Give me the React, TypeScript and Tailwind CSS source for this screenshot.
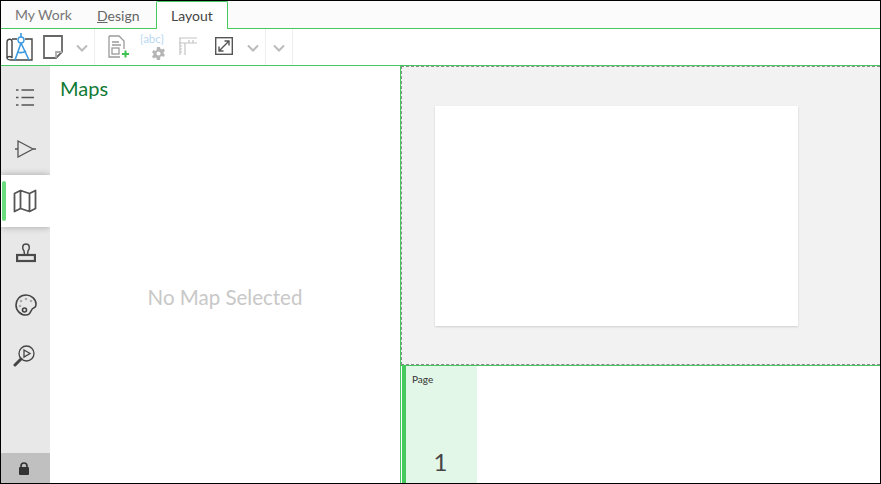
import React from "react";

const Chevron = () => (
  <svg width="12" height="8" viewBox="0 0 12 8" fill="none" stroke="#bbb" strokeWidth="2"><path d="M1 1.500l5 5 5-5" /></svg>
);

const SideIcon = ({ children, active }: { children: React.ReactNode; active?: boolean }) => (
  <div className={active ? "relative h-[52px] bg-white flex items-center justify-center shadow-[0_0_7px_rgba(0,0,0,0.3)] z-10" : "h-[52px] flex items-center justify-center"}>
    {active && <div className="absolute left-[1px] top-[6px] w-[4px] h-[40px] rounded-sm bg-[#6bdc7c]" />}
    {children}
  </div>
);

export default function App() {
  return (
    <div className="w-[881px] h-[484px] border border-black bg-white flex flex-col overflow-hidden font-['Lato','Open_Sans',sans-serif]">
      {/* tabs */}
      <div className="h-[28px] shrink-0 flex border-b border-[#46c95e] bg-[#fbfbfb] text-[14px] text-[#777]">
        <div className="w-[83px] pl-[14px] pt-[3px]">My Work</div>
        <div className="w-[72px] pl-[13px] pt-[4px] text-[#666]"><span className="underline">D</span>esign</div>
        <div className="w-[72px] h-[28px] border border-b-0 border-[#46c95e] rounded-t-[2px] bg-white text-[#444] text-center pt-[3px]">Layout</div>
      </div>
      {/* toolbar */}
      <div className="h-[37px] shrink-0 flex items-center border-b border-[#46c95e] bg-white">
        <div className="w-[94px] h-full flex items-center border-r border-[#eee] pl-[5px]">
          <svg width="27" height="29" viewBox="0 0 27 29" fill="none">
            <path d="M1 9c0-3 4-4 5-1v17c-1-2-4-2-5 0zM6 6h5M19 6h7v21H5c-2 0-4-1-4-2" stroke="#444" strokeWidth="1.400" />
            <path d="M15 10L9 27M15 10l8 17M11 19c3 1 6 1 9-1M15 0v4" stroke="#3b9ae1" strokeWidth="1.600" />
            <circle cx="15" cy="7" r="3" stroke="#3b9ae1" strokeWidth="1.400" fill="#fff" />
          </svg>
          <svg className="ml-[10px]" width="20" height="24" viewBox="0 0 20 24" fill="none" stroke="#666" strokeWidth="1.800">
            <path d="M1 1h18v16l-6 6H1z" />
            <path d="M19 17h-6v6" stroke="#aaa" />
          </svg>
          <span className="ml-[13px] mt-[1px]"><Chevron /></span>
        </div>
        <div className="w-[171px] h-full flex items-center border-r border-[#eee]">
          <svg className="ml-[13px]" width="22" height="24" viewBox="0 0 22 24" fill="none" stroke="#9a9a9a" strokeWidth="1.300">
            <path d="M1 1h10l5 5v8M1 1v21h11" />
            <path d="M4 7h7M4 10h9" />
            <rect x="4" y="13" width="7" height="6" />
            <path d="M14 19h7M17.500 15.500v7" stroke="#3cc24f" strokeWidth="2" />
          </svg>
          <div className="ml-[10px] relative w-[26px] h-[28px]">
            <span className="absolute left-0 top-[-1px] text-[11.500px] leading-[14px] text-[#b9d8f2]">{"{abc}"}</span>
            <svg className="absolute left-[12px] top-[14px]" width="13" height="13" viewBox="0 0 13 13" fill="#b5b5b5">
              <path d="M5 0h3l.4 1.800 1.500.7 1.600-1 1.500 2.300-1.400 1.200v1.600l1.400 1.200-1.500 2.300-1.600-1-1.500.7L8 13H5l-.4-1.800-1.500-.7-1.600 1L0 9.200l1.400-1.200V6.400L0 5.200 1.500 2.900l1.600 1 1.500-.7z" />
              <circle cx="6.500" cy="6.500" r="2" fill="#fff" />
            </svg>
          </div>
          <svg className="ml-[13px] mb-[2px]" width="18" height="18" viewBox="0 0 18 18" fill="none" stroke="#c4c4c4" strokeWidth="1.200">
            <path d="M0 1h18M0 6h18M1 1v17M6 6v12M1 9h2M1 12h2M1 15h2M10 6V3M14 6V3" />
          </svg>
          <svg className="ml-[18px] mb-[2px]" width="18" height="18" viewBox="0 0 18 18" fill="none" stroke="#555" strokeWidth="1.400">
            <rect x="0.700" y="0.700" width="16.600" height="16.600" />
            <path d="M4 14L14 4M9.500 4H14v4.500M4 9.500V14h4.500" />
          </svg>
          <span className="ml-[14px] mt-[1px]"><Chevron /></span>
        </div>
        <div className="w-[27px] h-full flex items-center justify-center border-r border-[#eee]"><span className="mt-[1px]"><Chevron /></span></div>
      </div>
      {/* body */}
      <div className="flex-1 flex min-h-0">
        <div className="w-[49px] shrink-0 bg-[#e8e8e8] flex flex-col">
          <div className="flex-1 pt-[5px]">
            <SideIcon>
              <svg className="mr-[2px]" width="18" height="17" viewBox="0 0 18 17" fill="none" stroke="#555" strokeWidth="1.300">
                <path d="M0 1h2.500M5.500 1H18M0 8.500h2.500M5.500 8.500H18M0 16h2.500M5.500 16H18" />
              </svg>
            </SideIcon>
            <SideIcon>
              <svg width="21" height="18" viewBox="0 0 21 18" fill="none" stroke="#555" strokeWidth="1.300">
                <path d="M3 1l15 8-15 8zM0 9h3M18 9h3" />
              </svg>
            </SideIcon>
            <SideIcon active>
              <svg className="mr-[2px]" width="24" height="24" viewBox="0 0 24 24" fill="none" stroke="#555" strokeWidth="1.800" strokeLinejoin="round">
                <path d="M1.500 4.500L7.500 1.500l9 3 6-3v18L16.500 22.500l-9-3-6 3zM7.500 1.500v18M16.500 4.500v18" />
              </svg>
            </SideIcon>
            <SideIcon>
              <svg width="20" height="20" viewBox="0 0 20 20" fill="none" stroke="#4a4a4a" strokeWidth="2.200">
                <rect x="1.100" y="12" width="17.800" height="6" />
                <path d="M8.500 11.500L8 8C6 5.500 6 1 10 1s4 4.500 2 7l-.5 3.500" strokeWidth="1.500" />
              </svg>
            </SideIcon>
            <SideIcon>
              <svg width="22" height="22" viewBox="0 0 22 22" fill="none" stroke="#444" strokeWidth="1.600">
                <path d="M11 1C5 1 1 5.500 1 11s4.500 10 10 10c3 0 4-1.500 5-4 .8-2 2-3 3.500-3.500 1.500-.6 1.500-2 1.500-3.500C21 5 16 1 11 1z" />
                <circle cx="9.500" cy="16" r="2" />
                <circle cx="6" cy="7" r="1.300" fill="#aaa" stroke="none" />
                <circle cx="11" cy="5" r="1.300" fill="#aaa" stroke="none" />
                <circle cx="16" cy="7" r="1.300" fill="#aaa" stroke="none" />
                <circle cx="5" cy="12" r="1.300" fill="#aaa" stroke="none" />
              </svg>
            </SideIcon>
            <SideIcon>
              <svg className="mb-[3px] mr-[3px]" width="22" height="22" viewBox="0 0 22 22" fill="none" stroke="#444" strokeWidth="1.300">
                <circle cx="13.500" cy="8.500" r="7.500" />
                <path d="M11 5l6 3.500-6 3.500z" />
                <path d="M8 14l-6 6" strokeWidth="3" strokeLinecap="round" />
              </svg>
            </SideIcon>
          </div>
          <div className="h-[30px] bg-[#c0c0c0] flex items-center justify-center">
            <svg className="mr-[3px]" width="10" height="13" viewBox="0 0 10 13" fill="#333">
              <path d="M2 5.500V4a3 3 0 016 0v1.500" fill="none" stroke="#333" strokeWidth="1.600" />
              <rect y="5" width="10" height="8" rx="1" />
            </svg>
          </div>
        </div>
        <div className="relative z-20 bg-white w-[350px] shrink-0 flex flex-col">
          <div className="pl-[10px] pt-[8px] text-[20px] leading-[28px] text-[#107a35]">Maps</div>
          <div className="flex-1 flex items-center justify-center pt-[10px] text-[20.500px] text-[#c8c8c8]">No Map Selected</div>
        </div>
        <div className="flex-1 flex flex-col border-l border-[#46c95e] min-w-0">
          <div className="h-[299px] shrink-0 bg-[#f2f2f2] border-t border-b border-l border-dashed border-[#888] pl-[33px] pt-[39px]">
            <div className="w-[363px] h-[220px] bg-white shadow-[0_1px_2px_rgba(0,0,0,0.15)]" />
          </div>
          <div className="flex-1 flex border-t border-[#46c95e] pl-[1px] min-h-0">
            <div className="w-[75px] border-l-[4px] border-[#46c95e] bg-[#e2f7e8] flex flex-col text-[#333]">
              <div className="pl-[6px] pt-[6px] text-[10px] leading-[14px]">Page</div>
              <div className="mt-auto text-center text-[24px] leading-[26px] pr-[2px] pb-[8px] text-[#444]">1</div>
            </div>
          </div>
        </div>
      </div>
    </div>
  );
}
